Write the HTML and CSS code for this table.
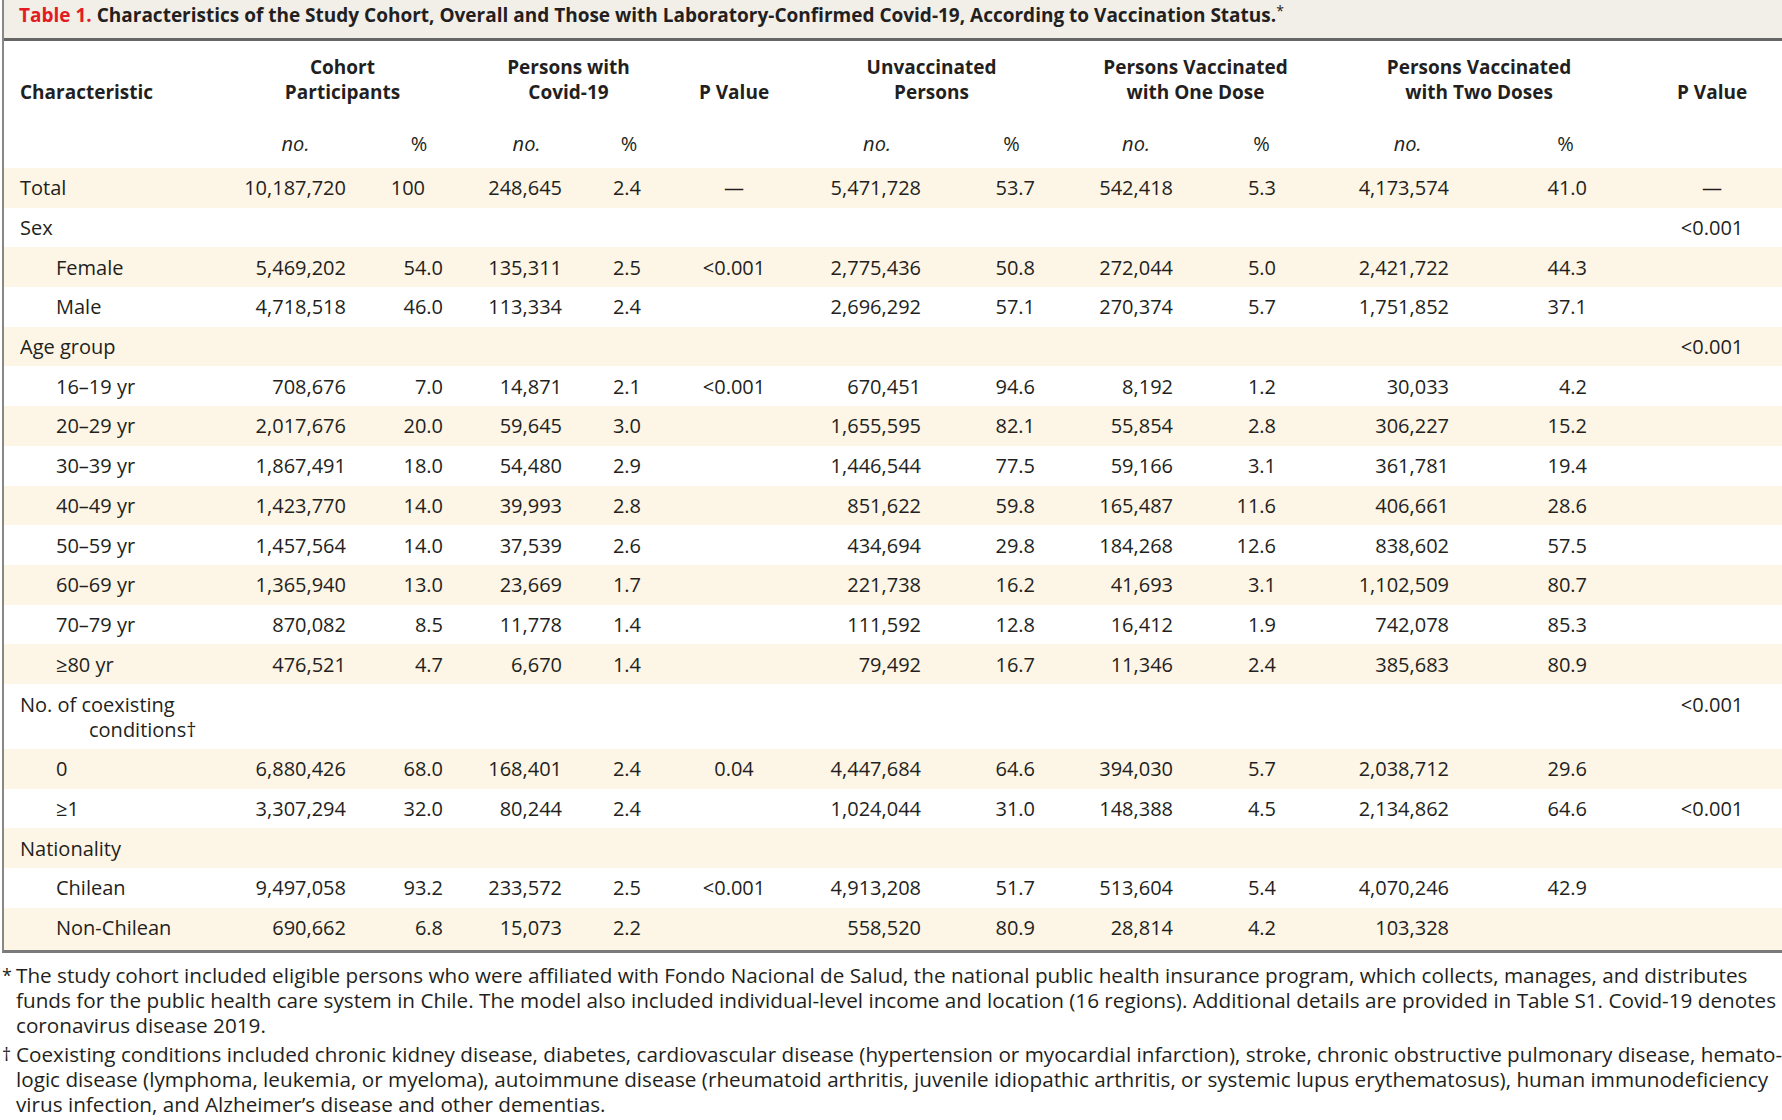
FILE: index.html
```html
<!DOCTYPE html>
<html lang="en">
<head>
<meta charset="utf-8">
<title>Table 1</title>
<link rel="stylesheet" href="styles.css">
</head>
<body>
<div class="frame">
  <div class="caption"><span class="tlabel">Table 1.</span> Characteristics of the Study Cohort, Overall and Those with Laboratory-Confirmed Covid-19, According to Vaccination Status.<span class="star">*</span></div>
  <table class="data">
    <colgroup>
      <col class="w0"><col class="w1"><col class="w2"><col class="w3"><col class="w4"><col class="w5"><col class="w6"><col class="w7"><col class="w8"><col class="w9"><col class="w10"><col class="w11"><col class="w12">
    </colgroup>
    <thead>
      <tr class="hrow1">
        <th class="hchar">Characteristic</th>
        <th colspan="2">Cohort<br>Participants</th>
        <th colspan="2">Persons with<br>Covid-19</th>
        <th>P Value</th>
        <th colspan="2">Unvaccinated<br>Persons</th>
        <th colspan="2" class="shift">Persons Vaccinated<br>with One Dose</th>
        <th colspan="2" class="shift">Persons Vaccinated<br>with Two Doses</th>
        <th>P Value</th>
      </tr>
      <tr class="hrow2">
        <th></th>
        <th class="u">no.</th><th>%</th>
        <th class="u">no.</th><th>%</th>
        <th></th>
        <th class="u">no.</th><th>%</th>
        <th class="u">no.</th><th>%</th>
        <th class="u">no.</th><th>%</th>
        <th></th>
      </tr>
    </thead>
    <tbody>
      <tr class="sh"><td class="lab">Total</td><td>10,187,720</td><td class="int">100</td><td>248,645</td><td>2.4</td><td>—</td><td>5,471,728</td><td>53.7</td><td>542,418</td><td>5.3</td><td>4,173,574</td><td>41.0</td><td>—</td></tr>
      <tr><td class="lab">Sex</td><td></td><td></td><td></td><td></td><td></td><td></td><td></td><td></td><td></td><td></td><td></td><td>&lt;0.001</td></tr>
      <tr class="sh"><td class="lab sub">Female</td><td>5,469,202</td><td>54.0</td><td>135,311</td><td>2.5</td><td>&lt;0.001</td><td>2,775,436</td><td>50.8</td><td>272,044</td><td>5.0</td><td>2,421,722</td><td>44.3</td><td></td></tr>
      <tr><td class="lab sub">Male</td><td>4,718,518</td><td>46.0</td><td>113,334</td><td>2.4</td><td></td><td>2,696,292</td><td>57.1</td><td>270,374</td><td>5.7</td><td>1,751,852</td><td>37.1</td><td></td></tr>
      <tr class="sh"><td class="lab">Age group</td><td></td><td></td><td></td><td></td><td></td><td></td><td></td><td></td><td></td><td></td><td></td><td>&lt;0.001</td></tr>
      <tr><td class="lab sub">16–19 yr</td><td>708,676</td><td>7.0</td><td>14,871</td><td>2.1</td><td>&lt;0.001</td><td>670,451</td><td>94.6</td><td>8,192</td><td>1.2</td><td>30,033</td><td>4.2</td><td></td></tr>
      <tr class="sh"><td class="lab sub">20–29 yr</td><td>2,017,676</td><td>20.0</td><td>59,645</td><td>3.0</td><td></td><td>1,655,595</td><td>82.1</td><td>55,854</td><td>2.8</td><td>306,227</td><td>15.2</td><td></td></tr>
      <tr><td class="lab sub">30–39 yr</td><td>1,867,491</td><td>18.0</td><td>54,480</td><td>2.9</td><td></td><td>1,446,544</td><td>77.5</td><td>59,166</td><td>3.1</td><td>361,781</td><td>19.4</td><td></td></tr>
      <tr class="sh"><td class="lab sub">40–49 yr</td><td>1,423,770</td><td>14.0</td><td>39,993</td><td>2.8</td><td></td><td>851,622</td><td>59.8</td><td>165,487</td><td>11.6</td><td>406,661</td><td>28.6</td><td></td></tr>
      <tr><td class="lab sub">50–59 yr</td><td>1,457,564</td><td>14.0</td><td>37,539</td><td>2.6</td><td></td><td>434,694</td><td>29.8</td><td>184,268</td><td>12.6</td><td>838,602</td><td>57.5</td><td></td></tr>
      <tr class="sh"><td class="lab sub">60–69 yr</td><td>1,365,940</td><td>13.0</td><td>23,669</td><td>1.7</td><td></td><td>221,738</td><td>16.2</td><td>41,693</td><td>3.1</td><td>1,102,509</td><td>80.7</td><td></td></tr>
      <tr><td class="lab sub">70–79 yr</td><td>870,082</td><td>8.5</td><td>11,778</td><td>1.4</td><td></td><td>111,592</td><td>12.8</td><td>16,412</td><td>1.9</td><td>742,078</td><td>85.3</td><td></td></tr>
      <tr class="sh"><td class="lab sub">≥80 yr</td><td>476,521</td><td>4.7</td><td>6,670</td><td>1.4</td><td></td><td>79,492</td><td>16.7</td><td>11,346</td><td>2.4</td><td>385,683</td><td>80.9</td><td></td></tr>
      <tr class="tall"><td class="lab hang">No. of coexisting<br>conditions†</td><td></td><td></td><td></td><td></td><td></td><td></td><td></td><td></td><td></td><td></td><td></td><td>&lt;0.001</td></tr>
      <tr class="sh"><td class="lab sub">0</td><td>6,880,426</td><td>68.0</td><td>168,401</td><td>2.4</td><td>0.04</td><td>4,447,684</td><td>64.6</td><td>394,030</td><td>5.7</td><td>2,038,712</td><td>29.6</td><td></td></tr>
      <tr><td class="lab sub">≥1</td><td>3,307,294</td><td>32.0</td><td>80,244</td><td>2.4</td><td></td><td>1,024,044</td><td>31.0</td><td>148,388</td><td>4.5</td><td>2,134,862</td><td>64.6</td><td>&lt;0.001</td></tr>
      <tr class="sh"><td class="lab">Nationality</td><td></td><td></td><td></td><td></td><td></td><td></td><td></td><td></td><td></td><td></td><td></td><td></td></tr>
      <tr><td class="lab sub">Chilean</td><td>9,497,058</td><td>93.2</td><td>233,572</td><td>2.5</td><td>&lt;0.001</td><td>4,913,208</td><td>51.7</td><td>513,604</td><td>5.4</td><td>4,070,246</td><td>42.9</td><td></td></tr>
      <tr class="sh last"><td class="lab sub">Non-Chilean</td><td>690,662</td><td>6.8</td><td>15,073</td><td>2.2</td><td></td><td>558,520</td><td>80.9</td><td>28,814</td><td>4.2</td><td>103,328</td><td></td><td></td></tr>
    </tbody>
  </table>
</div>
<div class="notes">
  <div class="note"><span class="mark">*</span><span class="ntext">The study cohort included eligible persons who were affiliated with Fondo Nacional de Salud, the national public health insurance program, which collects, manages, and distributes<br>funds for the public health care system in Chile. The model also included individual-level income and location (16 regions). Additional details are provided in Table S1. Covid-19 denotes<br>coronavirus disease 2019.</span></div>
  <div class="note"><span class="mark">†</span><span class="ntext">Coexisting conditions included chronic kidney disease, diabetes, cardiovascular disease (hypertension or myocardial infarction), stroke, chronic obstructive pulmonary disease, hemato-<br>logic disease (lymphoma, leukemia, or myeloma), autoimmune disease (rheumatoid arthritis, juvenile idiopathic arthritis, or systemic lupus erythematosus), human immunodeficiency<br>virus infection, and Alzheimer’s disease and other dementias.</span></div>
</div>
</body>
</html>
```

FILE: styles.css
```css
html, body {
  margin: 0;
  padding: 0;
  background: #ffffff;
  overflow: hidden;
}
body {
  font-family: "Open Sans", Lato, "Liberation Sans", sans-serif;
  font-size: 20px;
  color: #231f20;
  width: 1782px;
  height: 1120px;
}
.frame {
  margin-left: 2px;
  border-left: 2px solid #878787;
  border-bottom: 3px solid #7a7a7a;
  width: 1787px;
}
.caption {
  background: #f2eee8;
  height: 41px;
  line-height: 22px;
  padding-top: 0;
  padding-left: 15px;
  font-weight: 700;
  font-size: 19px;
  white-space: nowrap;
  border-bottom: 3px solid #666666;
  box-sizing: border-box;
}
.tlabel {
  color: #e31b23;
}
.star {
  font-size: 14px;
  vertical-align: 6px;
  font-weight: 400;
}
.data {
  border-collapse: collapse;
  table-layout: fixed;
  width: 1787px;
}
.w0 { width: 215px; }
.w1 { width: 153px; }
.w2 { width: 94px; }
.w3 { width: 121px; }
.w4 { width: 84px; }
.w5 { width: 126px; }
.w6 { width: 160px; }
.w7 { width: 109px; }
.w8 { width: 140px; }
.w9 { width: 111px; }
.w10 { width: 181px; }
.w11 { width: 135px; }
.w12 { width: 158px; }

.data th {
  padding: 0;
  line-height: 25px;
  text-align: center;
  white-space: nowrap;
}
.hrow1 th {
  font-weight: 700;
  font-size: 19px;
  vertical-align: bottom;
  padding-top: 14px;
  padding-bottom: 3px;
}
.hrow1 th.shift {
  padding-left: 8px;
}
.hrow1 .hchar {
  text-align: left;
  padding-left: 16px;
}
.hrow2 th {
  font-weight: 400;
  vertical-align: bottom;
  padding-top: 23px;
  padding-bottom: 12px;
}
.hrow2 .u {
  font-style: italic;
}

.data td {
  line-height: 25px;
  padding: 7.35px 0;
  text-align: right;
  white-space: nowrap;
  vertical-align: middle;
}
.data tr.sh td {
  background: #fdf5e6;
}
.data td.lab {
  text-align: left;
  padding-left: 16px;
}
.data td.sub {
  padding-left: 52px;
}
.data td.hang {
  padding-left: 85px;
  text-indent: -69px;
}
.data tr.tall td {
  vertical-align: top;
  padding-top: 8px;
  padding-bottom: 7px;
}
.data tr.last td {
  padding-bottom: 10px;
}

.data td:nth-child(2) { padding-right: 26px; }
.data td:nth-child(3) { padding-right: 23px; }
.data td:nth-child(4) { padding-right: 25px; }
.data td:nth-child(5) { padding-right: 30px; }
.data td:nth-child(6) { text-align: center; }
.data td:nth-child(7) { padding-right: 36px; }
.data td:nth-child(8) { padding-right: 31px; }
.data td:nth-child(9) { padding-right: 33px; }
.data td:nth-child(10) { padding-right: 41px; }
.data td:nth-child(11) { padding-right: 49px; }
.data td:nth-child(12) { padding-right: 46px; }
.data td:nth-child(13) { text-align: center; }
.data td.int { padding-right: 41px; }

.notes {
  padding: 10px 0 0 2px;
}
.note {
  display: flex;
  line-height: 25px;
}
.note + .note {
  margin-top: 4px;
}
.mark {
  width: 14px;
  flex: none;
  font-size: 18px;
}
.ntext {
  white-space: nowrap;
  font-size: 20.7px;
}
```
